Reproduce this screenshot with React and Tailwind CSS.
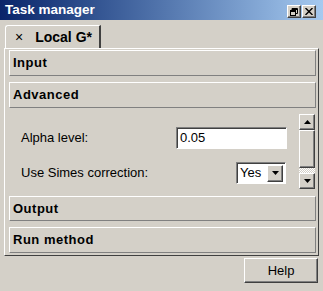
import React from 'react';

const raised = 'border border-t-white border-l-white border-r-[#404040] border-b-[#404040] shadow-[inset_-1px_-1px_0_#808080]';
const sunken = 'border border-t-[#808080] border-l-[#808080] border-r-white border-b-white shadow-[inset_1px_1px_0_#404040] bg-white';

const Arrow = ({ up }) => (
  <svg width="7" height="4" viewBox="0 0 7 4">
    {up ? <path d="M3.5 0 L7 4 L0 4 Z" fill="#000" /> : <path d="M0 0 L7 0 L3.5 4 Z" fill="#000" />}
  </svg>
);

const SectionHeader = ({ label, className = '' }) => (
  <div className={`flex items-center pl-[3px] border border-t-white border-l-white border-r-[#808080] border-b-[#808080] text-[13px] font-bold tracking-[0.5px] text-black ${className}`}>
    {label}
  </div>
);

const App = () => {
  return (
    <div
      className="w-[323px] h-[291px] bg-[#d4d0c8] flex flex-col overflow-hidden text-black"
      style={{ fontFamily: '"Liberation Sans", Arial, sans-serif' }}
    >
      {/* title bar */}
      <div className="h-[20px] flex items-center justify-between pl-[5px] pr-[7px] bg-gradient-to-r from-[#0a246a] to-[#a6caf0]">
        <span className="text-white font-bold text-[13.5px] leading-none">Task manager</span>
        <div className="flex gap-[1px] mt-[3px]">
          <div className={`w-[14px] h-[13px] bg-[#d4d0c8] flex items-center justify-center ${raised}`}>
            <svg width="8" height="8" viewBox="0 0 8 8">
              <path d="M2 0.5 H7.5 V5.5 H6 M2 0.5 V2 M2 1.5 H7.5" stroke="#000" fill="none" />
              <rect x="0.5" y="2.5" width="5" height="5" stroke="#000" fill="none" />
              <path d="M0.5 3.5 H5.5" stroke="#000" />
            </svg>
          </div>
          <div className={`w-[14px] h-[13px] bg-[#d4d0c8] flex items-center justify-center ${raised}`}>
            <svg width="8" height="7" viewBox="0 0 8 7">
              <path d="M0.5 0 L7.5 7 M7.5 0 L0.5 7" stroke="#000" strokeWidth="1.4" />
            </svg>
          </div>
        </div>
      </div>

      {/* tab strip */}
      <div className="h-[28px] flex items-end pl-[5px]">
        <div className="h-[23px] w-[96px] flex items-center gap-[12px] pl-[9px] border-t border-l border-t-white border-l-white border-r-2 border-r-[#404040] rounded-tl-[3px]">
          <span className="text-[14px] leading-none">×</span>
          <span className="text-[14px] font-bold leading-none">Local G*</span>
        </div>
      </div>

      {/* panel */}
      <div className="ml-[4px] w-[315px] flex flex-col pt-[1px] pl-[4px] pr-[2px] pb-[2px] border-t border-l border-t-white border-l-white border-r border-b border-r-[#404040] border-b-[#404040]">
        <SectionHeader label="Input" className="h-[26px]" />
        <SectionHeader label="Advanced" className="h-[26px] mt-[6px]" />

        {/* advanced content */}
        <div className="h-[88px] flex pr-[1px]">
          <div className="flex-1 flex flex-col pt-[19px] pl-[12px] pr-[12px] text-[13px]">
            <div className="h-[22px] flex items-center justify-between">
              <span>Alpha level:</span>
              <div className={`w-[111px] h-[22px] flex items-center pl-[3px] ${sunken}`}>0.05</div>
            </div>
            <div className="h-[22px] mt-[13px] flex items-center justify-between">
              <span>Use Simes correction:</span>
              <div className={`w-[50px] h-[22px] mr-[1px] flex items-center justify-between p-[2px] pl-[3px] ${sunken}`}>
                <span>Yes</span>
                <div className={`w-[16px] h-[17px] bg-[#d4d0c8] flex items-center justify-center ${raised}`}>
                  <Arrow />
                </div>
              </div>
            </div>
          </div>
          <div className="w-[16px] mt-[6px] h-[75px] flex flex-col">
            <div className={`h-[16px] bg-[#d4d0c8] flex items-center justify-center ${raised}`}>
              <Arrow up />
            </div>
            <div className={`h-[38px] bg-[#d4d0c8] ${raised}`} />
            <div className="h-[5px] bg-[repeating-conic-gradient(#ffffff_0_25%,#d4d0c8_0_50%)] bg-[length:2px_2px]" />
            <div className={`h-[16px] bg-[#d4d0c8] flex items-center justify-center ${raised}`}>
              <Arrow />
            </div>
          </div>
        </div>

        <SectionHeader label="Output" className="h-[25px]" />
        <SectionHeader label="Run method" className="h-[26px] mt-[6px]" />
      </div>

      {/* footer */}
      <div className="flex justify-end pr-[5px] pt-[2px]">
        <button className={`w-[74px] h-[25px] bg-[#d4d0c8] text-[13px] flex items-center justify-center ${raised}`}>
          Help
        </button>
      </div>
    </div>
  );
};

export default App;
